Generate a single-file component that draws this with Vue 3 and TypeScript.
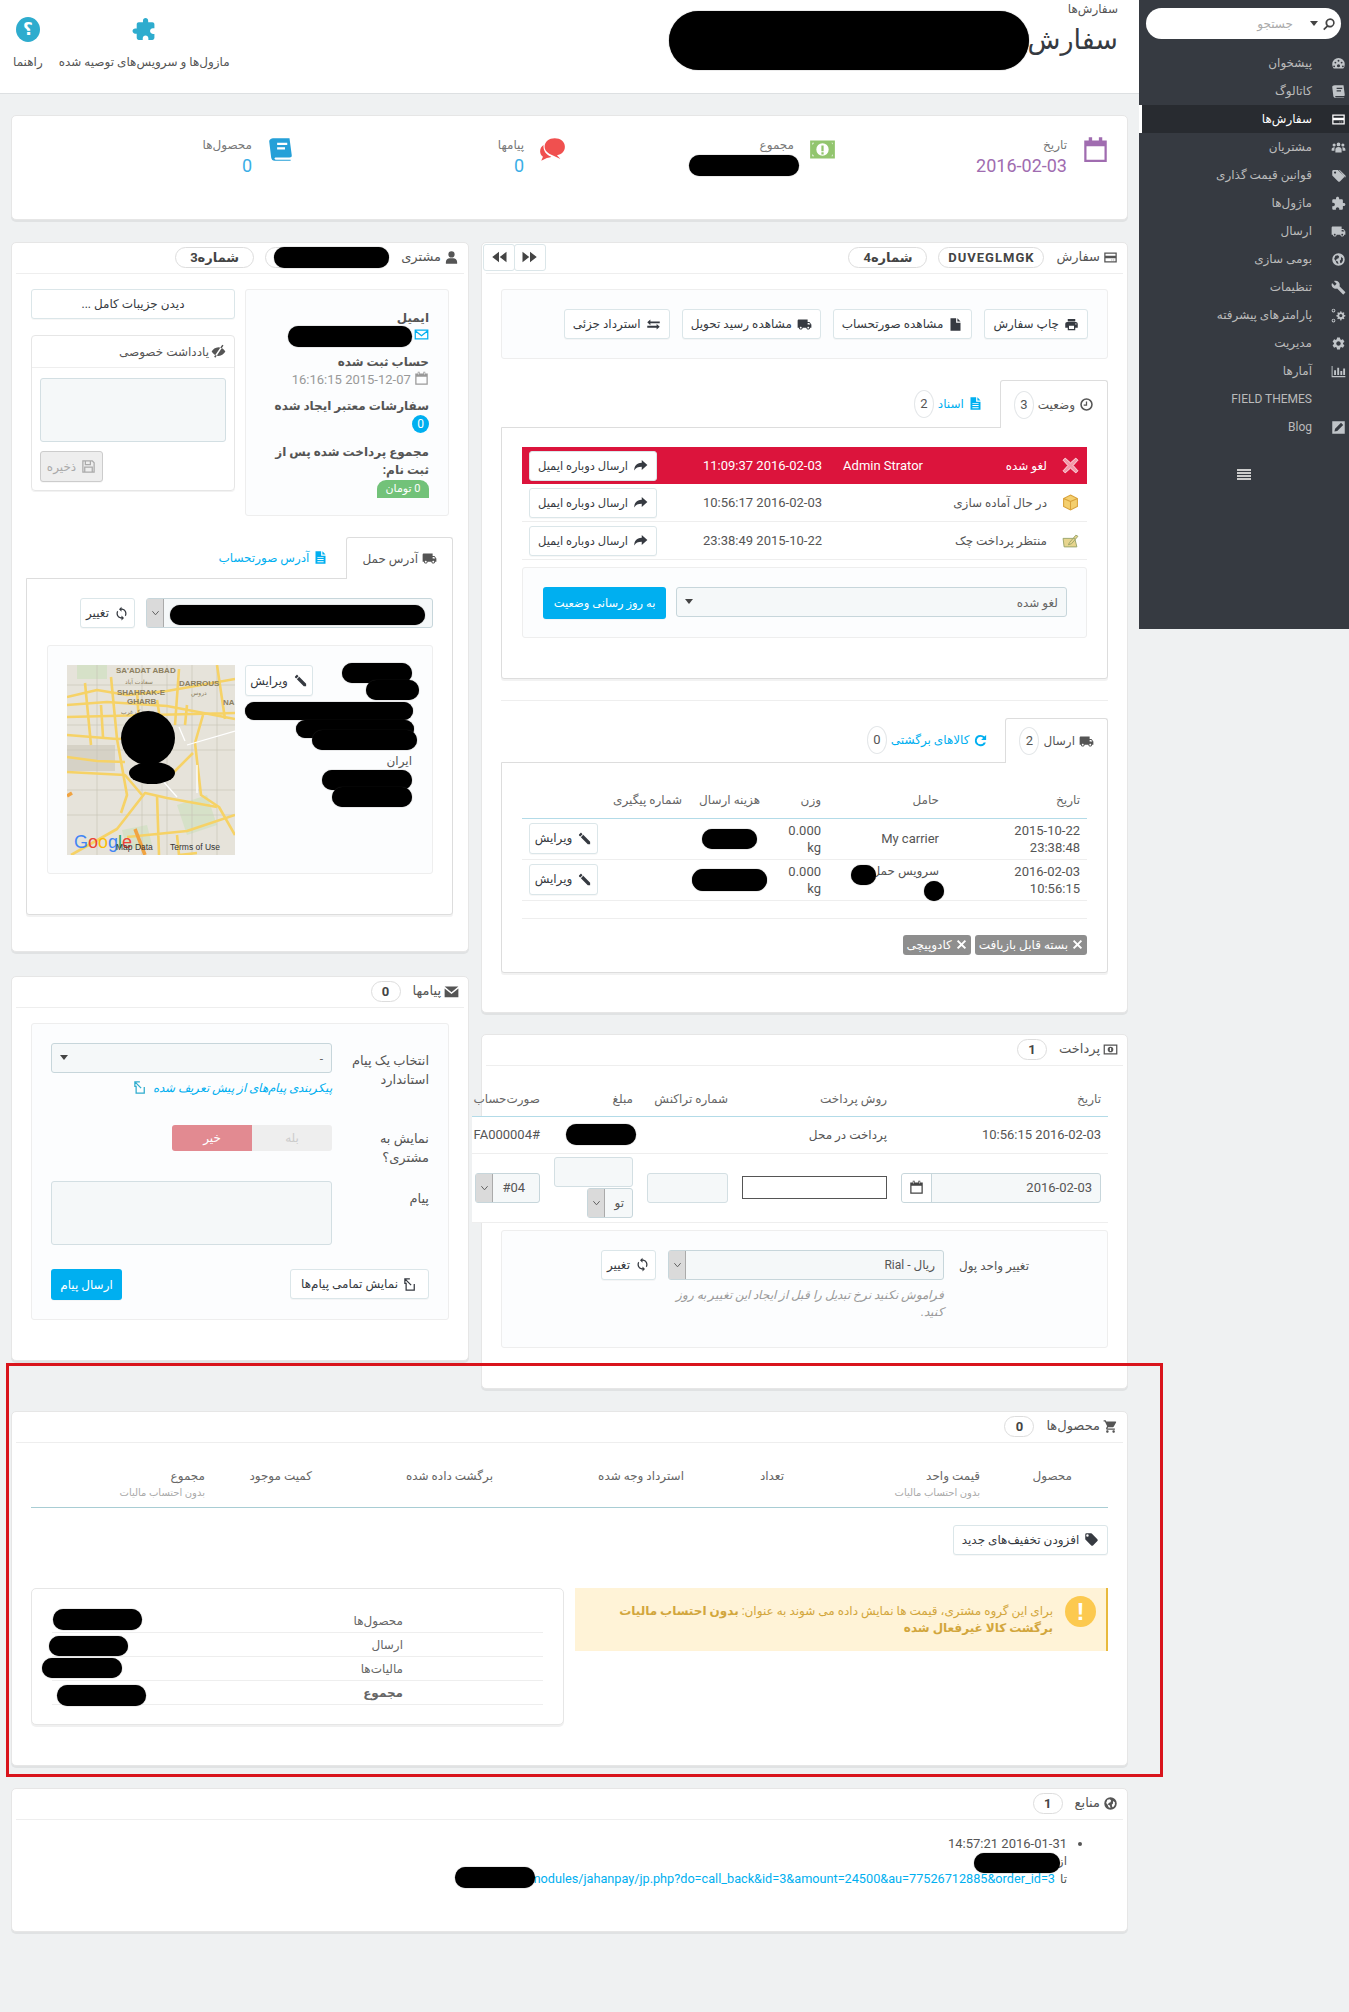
<template>
  <div class="page">
    <aside class="sidebar">
      <div class="search">
        <svg class="ic search-ic" viewBox="0 0 24 24"><path :d="icons.search" /></svg>
        <span class="caret dark"></span>
        <span class="search-text">جستجو</span>
      </div>
      <ul class="menu">
        <li v-for="item in menu" :key="item.label" :class="{ on: item.active }">
          <span class="menu-ic">
            <svg v-if="item.icon" class="ic" viewBox="0 0 24 24"><path :d="icons[item.icon]" /></svg>
          </span>
          <span>{{ item.label }}</span>
        </li>
      </ul>
      <div class="burger"><i></i><i></i><i></i><i></i></div>
    </aside>

    <main class="main">
      <header class="topbar">
        <div class="title-block">
          <div class="crumb">سفارش‌ها</div>
          <h1>سفارش</h1>
          <i class="mark m-title"></i>
        </div>
        <div class="toolbar">
          <a class="tool">
            <svg class="tool-ic flip" viewBox="0 0 24 24"><path :d="icons.puzzle" /></svg>
            <span>مازول‌ها و سرویس‌های توصیه شده</span>
          </a>
          <a class="tool">
            <span class="help-ic">؟</span>
            <span>راهنما</span>
          </a>
        </div>
      </header>

      <section class="stats">
        <div class="stat">
          <svg class="stat-ic purple" viewBox="0 0 24 24"><path :d="icons.calendarBig" /></svg>
          <div>
            <div class="stat-label">تاریخ</div>
            <div class="stat-value purple">2016-02-03</div>
          </div>
        </div>
        <div class="stat">
          <svg class="stat-ic green" viewBox="0 0 24 24"><path :d="icons.money" /></svg>
          <div>
            <div class="stat-label">مجموع</div>
            <i class="mark m-total"></i>
          </div>
        </div>
        <div class="stat">
          <svg class="stat-ic red" viewBox="0 0 24 24"><path :d="icons.chat" /></svg>
          <div>
            <div class="stat-label">پیامها</div>
            <div class="stat-value blue">0</div>
          </div>
        </div>
        <div class="stat">
          <svg class="stat-ic bookblue" viewBox="0 0 24 24"><path :d="icons.book" /></svg>
          <div>
            <div class="stat-label">محصول‌ها</div>
            <div class="stat-value blue">0</div>
          </div>
        </div>
      </section>

      <div class="columns">
        <div class="col">
          <!-- سفارش -->
          <section class="panel p-order">
            <div class="heading">
              <svg class="ic" viewBox="0 0 24 24"><path :d="icons.card" /></svg>
              <span class="h-text">سفارش</span>
              <span class="badge code">DUVEGLMGK</span>
              <span class="badge no">شماره4</span>
              <div class="pager">
                <button class="page-btn"><svg class="ic" viewBox="0 0 24 24"><path :d="icons.prev" /></svg></button>
                <button class="page-btn"><svg class="ic" viewBox="0 0 24 24"><path :d="icons.next" /></svg></button>
              </div>
            </div>

            <div class="well actions">
              <button class="btn"><svg class="ic" viewBox="0 0 24 24"><path :d="icons.print" /></svg>چاپ سفارش</button>
              <button class="btn"><svg class="ic" viewBox="0 0 24 24"><path :d="icons.file" /></svg>مشاهده صورتحساب</button>
              <button class="btn"><svg class="ic" viewBox="0 0 24 24"><path :d="icons.truck" /></svg>مشاهده رسید تحویل</button>
              <button class="btn"><svg class="ic" viewBox="0 0 24 24"><path :d="icons.exchange" /></svg>استرداد جزئی</button>
            </div>

            <ul class="tabs">
              <li class="tab active">
                <svg class="ic" viewBox="0 0 24 24"><path :d="icons.clock" /></svg>وضعیت
                <span class="count">3</span>
              </li>
              <li class="tab">
                <svg class="ic" viewBox="0 0 24 24"><path :d="icons.doc" /></svg>اسناد
                <span class="count">2</span>
              </li>
            </ul>
            <div class="tab-body status-body">
              <div v-for="row in history" :key="row.date" class="hist-row" :class="{ cancelled: row.cancelled }">
                <span class="hist-ic">
                  <svg viewBox="0 0 16 16" class="st-ic">
                    <path v-if="row.kind === 'x'" d="M3 1l5 4.500L13 1l2 2-4.500 5 4.500 5-2 2-5-4.500L3 15l-2-2 4.500-5L1 3z" fill="#f29aa9" stroke="#fff" stroke-width=".7" />
                    <path v-else-if="row.kind === 'box'" d="M8 1l6.500 3.200v7.600L8 15l-6.500-3.200V4.200z M8 7L2 4.500 M8 7l6-2.500 M8 7v8" fill="#f4cf6e" stroke="#d9a23b" stroke-width="1" />
                    <path v-else d="M1 6h11l2 8H2z M7 10l6-7 2 1-6 7-3 1z" fill="#e7d58e" stroke="#9aa56b" stroke-width=".9" />
                  </svg>
                </span>
                <span>{{ row.status }}</span>
                <span class="num">{{ row.who }}</span>
                <span class="num">{{ row.date }}</span>
                <button class="btn hist-btn"><svg class="ic" viewBox="0 0 24 24"><path :d="icons.share" /></svg>ارسال دوباره ایمیل</button>
              </div>
              <div class="well status-form">
                <div class="fake-select sel-status">لغو شده<span class="caret dark"></span></div>
                <button class="btn-blue">به روز رسانی وضعیت</button>
              </div>
            </div>

            <hr class="rule" />

            <ul class="tabs ship-tabs">
              <li class="tab active">
                <svg class="ic" viewBox="0 0 24 24"><path :d="icons.truck" /></svg>ارسال
                <span class="count">2</span>
              </li>
              <li class="tab">
                <svg class="ic" viewBox="0 0 24 24"><path :d="icons.undo" /></svg>کالاهای برگشتی
                <span class="count">0</span>
              </li>
            </ul>
            <div class="tab-body ship-body">
              <table class="grid ship-table">
                <colgroup>
                  <col class="w141" /><col class="w118" /><col class="w61" /><col class="w78" /><col class="w84" /><col class="w83" />
                </colgroup>
                <thead>
                  <tr>
                    <th>تاریخ</th>
                    <th>حامل</th>
                    <th>وزن</th>
                    <th>هزینه ارسال</th>
                    <th>شماره پیگیری</th>
                    <th></th>
                  </tr>
                </thead>
                <tbody>
                  <tr>
                    <td class="num">2015-10-22<br />23:38:48</td>
                    <td class="num">My carrier</td>
                    <td class="num">0.000<br />kg</td>
                    <td><i class="mark m-cost1"></i></td>
                    <td></td>
                    <td><button class="btn edit-btn"><svg class="ic flip" viewBox="0 0 24 24"><path :d="icons.pencil" /></svg>ویرایش</button></td>
                  </tr>
                  <tr>
                    <td class="num">2016-02-03<br />10:56:15</td>
                    <td class="rel">سرویس حمل<br />&nbsp;<i class="mark m-car1"></i><i class="mark m-car2"></i></td>
                    <td class="num">0.000<br />kg</td>
                    <td><i class="mark m-cost2"></i></td>
                    <td></td>
                    <td><button class="btn edit-btn"><svg class="ic flip" viewBox="0 0 24 24"><path :d="icons.pencil" /></svg>ویرایش</button></td>
                  </tr>
                  <tr class="empty-row"><td colspan="6"></td></tr>
                </tbody>
              </table>
              <div class="labels">
                <span class="label-grey"><svg class="ic" viewBox="0 0 24 24"><path :d="icons.times" /></svg>بسته قابل بازیافت</span>
                <span class="label-grey"><svg class="ic" viewBox="0 0 24 24"><path :d="icons.times" /></svg>کادوپیچی</span>
              </div>
            </div>
          </section>

          <!-- پرداخت -->
          <section class="panel p-pay">
            <div class="heading">
              <svg class="ic" viewBox="0 0 24 24"><path :d="icons.moneyLine" /></svg>
              <span class="h-text">پرداخت</span>
              <span class="badge round">1</span>
            </div>
            <table class="grid pay-table">
              <colgroup>
                <col class="w214" /><col class="w159" /><col class="w95" /><col class="w93" /><col class="w75" />
              </colgroup>
              <thead>
                <tr>
                  <th>تاریخ</th>
                  <th>روش پرداخت</th>
                  <th>شماره تراکنش</th>
                  <th>مبلغ</th>
                  <th>صورت‌حساب</th>
                </tr>
              </thead>
              <tbody>
                <tr class="pay-row">
                  <td class="num">2016-02-03 10:56:15</td>
                  <td>پرداخت در محل</td>
                  <td></td>
                  <td><i class="mark m-amount"></i></td>
                  <td class="num">#FA000004</td>
                </tr>
                <tr class="pay-form">
                  <td>
                    <div class="date-field">
                      <span class="num">2016-02-03</span>
                      <span class="addon"><svg class="ic" viewBox="0 0 24 24"><path :d="icons.calendar" /></svg></span>
                    </div>
                  </td>
                  <td><div class="plain-input"></div></td>
                  <td><div class="input"></div></td>
                  <td>
                    <div class="input"></div>
                    <div class="sys-select cur-select"><span class="sys-val">تو</span><span class="sys-btn"><svg viewBox="0 0 10 6"><path d="M1.500 1L5 5l3.500-4" /></svg></span></div>
                  </td>
                  <td><div class="sys-select inv-select"><span class="sys-val num">#04</span><span class="sys-btn"><svg viewBox="0 0 10 6"><path d="M1.500 1L5 5l3.500-4" /></svg></span></div></td>
                </tr>
              </tbody>
            </table>
            <div class="well currency">
              <div class="cur-label">تغییر واحد پول</div>
              <div>
                <div class="cur-line">
                  <div class="sys-select cur-main"><span class="sys-val">ریال - Rial</span><span class="sys-btn"><svg viewBox="0 0 10 6"><path d="M1.500 1L5 5l3.500-4" /></svg></span></div>
                  <button class="btn change-btn"><svg class="ic" viewBox="0 0 24 24"><path :d="icons.sync" /></svg>تغییر</button>
                </div>
                <p class="help">فراموش نکنید نرخ تبدیل را قبل از ایجاد این تغییر به روز کنید.</p>
              </div>
            </div>
          </section>
        </div>

        <div class="col left-col">
          <!-- مشتری -->
          <section class="panel p-customer">
            <div class="heading">
              <svg class="ic" viewBox="0 0 24 24"><path :d="icons.user" /></svg>
              <span class="h-text">مشتری</span>
              <span class="badge cust-badge"><i class="mark m-cust"></i></span>
              <span class="badge no">شماره3</span>
            </div>
            <div class="cust-grid">
              <div class="well cust-info">
                <div class="info-block rel">
                  <b>ایمیل</b>
                  <div><svg class="ic env" viewBox="0 0 24 24"><path class="ol" :d="icons.envelopeLine" /></svg></div>
                  <i class="mark m-email"></i>
                </div>
                <div class="info-block">
                  <b>حساب ثبت شده</b>
                  <div class="muted num"><svg class="ic cal" viewBox="0 0 24 24"><path :d="icons.calendar" /></svg> 2015-12-07 16:16:15</div>
                </div>
                <div class="info-block">
                  <b>سفارشات معتبر ایجاد شده</b>
                  <div><span class="dot-badge">0</span></div>
                </div>
                <div class="info-block last">
                  <b>مجموع پرداخت شده پس از ثبت نام:</b>
                  <div><span class="green-badge">0 تومان</span></div>
                </div>
              </div>
              <div>
                <button class="btn full">دیدن جزیبات کامل ...</button>
                <div class="note">
                  <div class="note-head"><svg class="ic" viewBox="0 0 24 24"><path :d="icons.eyeSlash" /></svg>یادداشت خصوصی</div>
                  <div class="note-body">
                    <div class="input note-area"></div>
                    <button class="btn save-btn"><svg class="ic" viewBox="0 0 24 24"><path class="ol" :d="icons.save" /></svg>ذخیره</button>
                  </div>
                </div>
              </div>
            </div>

            <ul class="tabs addr-tabs">
              <li class="tab active">
                <svg class="ic" viewBox="0 0 24 24"><path :d="icons.truck" /></svg>آدرس حمل
              </li>
              <li class="tab">
                <svg class="ic" viewBox="0 0 24 24"><path :d="icons.doc" /></svg>آدرس صورتحساب
              </li>
            </ul>
            <div class="tab-body addr-body">
              <div class="addr-select">
                <div class="sys-select addr-main"><span class="sys-val"></span><span class="sys-btn"><svg viewBox="0 0 10 6"><path d="M1.500 1L5 5l3.500-4" /></svg></span><i class="mark m-addrsel"></i></div>
                <button class="btn change-btn"><svg class="ic" viewBox="0 0 24 24"><path :d="icons.sync" /></svg>تغییر</button>
              </div>
              <div class="well addr-well">
                <div class="addr-text">
                  <i class="mark a1"></i><i class="mark a2"></i><i class="mark a3"></i><i class="mark a4"></i><i class="mark a5"></i><i class="mark a6"></i><i class="mark a7"></i>
                  <div class="country">ایران</div>
                </div>
                <button class="btn addr-edit"><svg class="ic flip" viewBox="0 0 24 24"><path :d="icons.pencil" /></svg>ویرایش</button>
                <svg class="map" viewBox="0 0 168 190">
                  <rect width="168" height="190" fill="#e6e3da" />
                  <rect x="0" y="80" width="48" height="26" fill="#d6d2c6" />
                  <path d="M10 0h30v14H10z M110 140l30-10 10 30-30 10z M55 165l25-5 5 20-25 5z" fill="#cfe0c0" opacity=".7" />
                  <g fill="none" stroke="#c9c5b8" stroke-width=".7">
                    <path d="M0 20H168 M0 60H168 M0 85H168 M0 125H168 M0 150H168 M30 0V190 M75 0V190 M100 0V190 M125 0V190 M150 0V190" />
                  </g>
                  <g fill="none" stroke="#f6d266" stroke-width="2.600" stroke-linejoin="round">
                    <path d="M0 40L40 37 100 41 168 54" />
                    <path d="M0 32L30 25 60 30 100 26 168 14" />
                    <path d="M0 70L50 74 90 72" />
                    <path d="M0 92L30 96 58 97" />
                    <path d="M0 107L58 110 75 130" />
                    <path d="M18 18L24 80 M44 12L50 74 60 130 54 148" />
                    <path d="M112 4L108 60 M90 35L94 60 M70 25L72 60" />
                    <path d="M136 50L128 78 134 130 152 142 168 170" />
                    <path d="M4 190L50 164 78 128 100 133 150 142" />
                    <path d="M60 172L120 166 168 150 M90 130L92 190 M110 170L112 190 130 188" />
                    <path d="M150 0L158 54 M126 88L104 110 M0 52L168 48 M34 40L36 72 M120 40L118 60" />
                  </g>
                  <path d="M120 80L168 66 M112 62L118 76 M130 100V128M95 115L110 132" fill="none" stroke="#fff" stroke-width="1.300" />
                  <path d="M0 131L5 128 M68 164L78 190" fill="none" stroke="#f0a341" stroke-width="3.500" />
                  <g class="map-label">
                    <text x="49" y="8">SA'ADAT ABAD</text>
                    <text x="112" y="21">DARROUS</text>
                    <text x="50" y="30">SHAHRAK-E</text>
                    <text x="60" y="39">GHARB</text>
                    <text x="156" y="40">NA</text>
                    <text x="58" y="19" class="fa">سعادت آباد</text>
                    <text x="124" y="30" class="fa">دروس</text>
                    <text x="54" y="49" class="fa">شهرک غرب</text>
                  </g>
                  <ellipse cx="81" cy="73" rx="27" ry="27" fill="#000" />
                  <ellipse cx="85" cy="108" rx="23" ry="11" fill="#000" />
                  <text x="7" y="183" class="goog"><tspan fill="#4285f4">G</tspan><tspan fill="#ea4335">o</tspan><tspan fill="#fbbc05">o</tspan><tspan fill="#4285f4">g</tspan><tspan fill="#34a853">l</tspan><tspan fill="#ea4335">e</tspan></text>
                  <text x="49" y="185" class="map-foot">Map Data</text>
                  <text x="103" y="185" class="map-foot">Terms of Use</text>
                </svg>
              </div>
            </div>
          </section>

          <!-- پیام ها -->
          <section class="panel p-messages">
            <div class="heading">
              <svg class="ic" viewBox="0 0 24 24"><path :d="icons.envelope" /></svg>
              <span class="h-text">پیامها</span>
              <span class="badge round">0</span>
            </div>
            <div class="well msg-well">
              <div class="msg-row r1">
                <label>انتخاب یک پیام استاندارد</label>
                <div>
                  <div class="fake-select">-<span class="caret dark"></span></div>
                  <a class="cfg-link">
                    پیکربندی پیام‌های از پیش تعریف شده
                    <svg class="ic" viewBox="0 0 24 24"><path class="ol" :d="icons.external" /></svg>
                  </a>
                </div>
              </div>
              <div class="msg-row r2">
                <label>نمایش به مشتری؟</label>
                <div class="switch"><span>بله</span><span class="off">خیر</span></div>
              </div>
              <div class="msg-row r3">
                <label>پیام</label>
                <div class="input msg-area"></div>
              </div>
              <div class="msg-foot">
                <button class="btn"><svg class="ic" viewBox="0 0 24 24"><path class="ol" :d="icons.external" /></svg>نمایش تمامی پیام‌ها</button>
                <button class="btn-blue send">ارسال پیام</button>
              </div>
            </div>
          </section>
        </div>
      </div>

      <!-- محصول ها -->
      <section class="panel p-products">
        <div class="heading">
          <svg class="ic" viewBox="0 0 24 24"><path :d="icons.cart" /></svg>
          <span class="h-text">محصول‌ها</span>
          <span class="badge round">0</span>
        </div>
        <table class="grid prod-table">
          <colgroup>
            <col class="w121" /><col class="w196" /><col class="w100" /><col class="w191" /><col class="w181" /><col class="w107" /><col class="w181" />
          </colgroup>
          <thead>
            <tr>
              <th class="first">محصول</th>
              <th>قیمت واحد<small>بدون احتساب مالیات</small></th>
              <th>تعداد</th>
              <th>استرداد وجه شده</th>
              <th>برگشت داده شده</th>
              <th>کمیت موجود</th>
              <th>مجموع<small>بدون احتساب مالیات</small></th>
            </tr>
          </thead>
        </table>
        <button class="btn discount-btn"><svg class="ic" viewBox="0 0 24 24"><path :d="icons.tag" /></svg>افزودن تخفیف‌های جدید</button>
        <div class="sum-row">
          <div class="alert">
            <span class="alert-ic">!</span>
            <p>برای این گروه مشتری، قیمت ها نمایش داده می شوند به عنوان: <b>بدون احتساب مالیات</b><br /><b>برگشت کالا غیرفعال شده</b></p>
          </div>
          <div class="totals">
            <div class="total-row"><span>محصول‌ها</span></div>
            <div class="total-row"><span>ارسال</span></div>
            <div class="total-row"><span>مالیات‌ها</span></div>
            <div class="total-row"><b>مجموع</b></div>
            <i class="mark t1"></i><i class="mark t2"></i><i class="mark t3"></i><i class="mark t4"></i>
          </div>
        </div>
      </section>

      <!-- منابع -->
      <section class="panel p-sources">
        <div class="heading">
          <svg class="ic" viewBox="0 0 24 24"><path :d="icons.globe" /></svg>
          <span class="h-text">منابع</span>
          <span class="badge round">1</span>
        </div>
        <ul class="sources">
          <li class="num">
            2016-01-31 14:57:21
            <div class="src-line">از<i class="mark m-from"></i></div>
            <div class="src-line">تا <a class="src-link"><bdi>/modules/jahanpay/jp.php?do=call_back&amp;id=3&amp;amount=24500&amp;au=77526712885&amp;order_id=3</bdi></a><i class="mark m-to"></i></div>
          </li>
        </ul>
      </section>
    </main>

    <!-- annotation frame -->
    <div class="red-frame"></div>
  </div>
</template>

<script setup lang="ts">
const icons: Record<string, string> = {
  search: 'M10 2a8 8 0 016.300 12.900l5.800 5.800-2.100 2.100-5.800-5.800A8 8 0 1110 2zm0 3a5 5 0 100 10 5 5 0 000-10z',
  dash: 'M12 3a10 10 0 00-10 10c0 2.500 1 5 2.500 7h15A10 10 0 0022 13 10 10 0 0012 3zM7 9a1.500 1.500 0 110 3 1.500 1.500 0 010-3zm5-3a1.500 1.500 0 110 3 1.500 1.500 0 010-3zm5 3a1.500 1.500 0 110 3 1.500 1.500 0 010-3zm-5 4a2.500 2.500 0 110 5 2.500 2.500 0 010-5zm-7 2a1.500 1.500 0 110 3 1.500 1.500 0 010-3zm14 0a1.500 1.500 0 110 3 1.500 1.500 0 010-3z',
  book: 'M6 2h14l2 15c.2 1.400-.6 2-2 2H8c-1 0-1.500.5-1.300 1.200.2.500.7.800 1.300.800h13v1H7c-2 0-3-1.300-3.300-3L2 5c-.2-1.800 1.800-3 4-3zm3 4v2h9V6zm0 4v2h7v-2z',
  card: 'M2 4h20v16H2zm2 2v3h16V6zm0 7v5h16v-5zm9 2.500h2v1h-2zm3 0h2v1h-2z',
  users: 'M12 4a3 3 0 110 6 3 3 0 010-6zM5 5.500a2.500 2.500 0 110 5 2.500 2.500 0 010-5zm14 0a2.500 2.500 0 110 5 2.500 2.500 0 010-5zM7 20v-5c0-2 2-4 5-4s5 2 5 4v5zM1 17v-2c0-2 1.500-3.500 4-3.500.7 0 1 0 1.300.2C5.500 12.800 5.500 14 5.500 17zm22 0v-2c0-2-1.500-3.500-4-3.500-.7 0-1 0-1.300.2.800 1.100.800 2.300.800 5.300z',
  tags: 'M11 3H4a2 2 0 00-2 2v7l9.500 9.500a2 2 0 002.800 0l6.200-6.200a2 2 0 000-2.800zM6.500 9a1.800 1.800 0 110-3.600 1.800 1.800 0 010 3.600zM14 3l9 9c.6.600.6 2 0 2.600l-1 1c.3-1-.1-2-.7-2.600L12.500 3z',
  puzzle: 'M20.500 11H19V7c0-1.100-.9-2-2-2h-4V3.500C13 2.120 11.880 1 10.500 1S8 2.120 8 3.500V5H4c-1.100 0-1.990.9-1.990 2v3.800H3.500c1.490 0 2.700 1.210 2.700 2.700s-1.210 2.700-2.700 2.700H2V20c0 1.100.9 2 2 2h3.800v-1.500c0-1.490 1.210-2.700 2.700-2.700 1.490 0 2.700 1.210 2.700 2.700V22H17c1.100 0 2-.9 2-2v-4h1.500c1.380 0 2.500-1.120 2.500-2.500S21.880 11 20.500 11z',
  truck: 'M20 8h-3V4H3c-1.100 0-2 .9-2 2v11h2c0 1.660 1.340 3 3 3s3-1.340 3-3h6c0 1.660 1.340 3 3 3s3-1.340 3-3h2v-5l-3-4zM6 18.500c-.83 0-1.500-.67-1.500-1.500s.67-1.500 1.500-1.500 1.500.67 1.500 1.500-.67 1.500-1.500 1.500zm13.500-9l1.960 2.500H17V9.500h2.500zm-1.500 9c-.83 0-1.500-.67-1.500-1.500s.67-1.500 1.500-1.500 1.500.67 1.500 1.500-.67 1.500-1.500 1.500z',
  globe: 'M12 2a10 10 0 100 20 10 10 0 000-20zM7 6l4-1 2 2-1 3-3 1-1 3 3 1 1 4-3-1-2-5-2-2zm9 2l3 2v4l-2 3-2 1-1-4 2-2z',
  wrench: 'M22.700 19l-9.100-9.100c.9-2.300.4-5-1.500-6.900-2-2-5-2.400-7.400-1.300L9 6 6 9 1.600 4.700C.4 7.100.9 10.100 2.900 12.100c1.900 1.900 4.600 2.400 6.900 1.500l9.100 9.100c.4.4 1 .4 1.400 0l2.300-2.300c.5-.4.5-1.100.1-1.400z',
  cogs: 'M15 5l1.500 0 .5 2 1.600.7 1.800-1 1.100 1.100-1 1.800.6 1.400 1.900.6v1.600l-1.900.6-.6 1.400 1 1.800-1.100 1.100-1.800-1-1.600.7-.5 2H15l-.5-2-1.600-.7-1.800 1-1.100-1.100 1-1.800-.6-1.400-1.900-.6v-1.600l1.900-.6.6-1.400-1-1.800 1.100-1.100 1.800 1 1.600-.7zm.700 4.500a2.600 2.600 0 100 5.200 2.600 2.600 0 000-5.200zM4 1a3 3 0 110 6 3 3 0 010-6zm0 1.500a1.500 1.500 0 100 3 1.500 1.500 0 000-3zM4 17a3 3 0 110 6 3 3 0 010-6zm0 1.500a1.500 1.500 0 100 3 1.500 1.500 0 000-3z',
  cog: 'M19.140 12.940c.04-.3.06-.61.06-.94 0-.32-.02-.64-.07-.94l2.030-1.580a.49.49 0 00.12-.61l-1.920-3.320a.488.488 0 00-.59-.22l-2.390.96c-.5-.38-1.030-.7-1.620-.94l-.36-2.540a.484.484 0 00-.48-.41h-3.840c-.24 0-.43.17-.47.41l-.36 2.540c-.59.24-1.130.57-1.620.94l-2.390-.96c-.22-.08-.47 0-.59.22L2.740 8.870c-.12.21-.08.47.12.61l2.030 1.580c-.05.3-.09.63-.09.94s.02.64.07.94l-2.030 1.580a.49.49 0 00-.12.61l1.920 3.320c.12.22.37.29.59.22l2.390-.96c.5.38 1.030.7 1.620.94l.36 2.540c.05.24.24.41.48.41h3.840c.24 0 .44-.17.47-.41l.36-2.540c.59-.24 1.130-.56 1.620-.94l2.390.96c.22.08.47 0 .59-.22l1.920-3.320c.12-.22.07-.47-.12-.61l-2.010-1.580zM12 15.600c-1.980 0-3.600-1.620-3.600-3.600s1.620-3.600 3.600-3.600 3.600 1.620 3.600 3.600-1.620 3.600-3.600 3.600z',
  chart: 'M1 3h1.500v16H23v2H1zM5 10h3v7.500H5zm5-4h3v11.500h-3zm5 5h3v6.500h-3zm4.500-4h3v10.500h-3z',
  blog: 'M2 2h20v20H2zm14 2.500L6.500 14l-1 4.500 4.500-1L19.500 8z',
  next: 'M12 5l-9 7 9 7zM22 5l-9 7 9 7z',
  prev: 'M2 5l9 7-9 7zM12 5l9 7-9 7z',
  print: 'M19 8H5c-1.660 0-3 1.340-3 3v6h4v4h12v-4h4v-6c0-1.660-1.340-3-3-3zm-3 11H8v-5h8v5zm3-7c-.55 0-1-.45-1-1s.45-1 1-1 1 .45 1 1-.45 1-1 1zM18 3H6v4h12z',
  file: 'M13 2v7h7v13H4V2zM15 2l5 5h-5z',
  exchange: 'M7 4v3h15v3H7v3L2 8.500zM17 11v3H2v3h15v3l5-4.500z',
  clock: 'M12 2a10 10 0 100 20 10 10 0 000-20zm0 2.500a7.500 7.500 0 110 15 7.500 7.500 0 010-15zM11 7h2v7H7.500v-2H11z',
  doc: 'M13 2v7h7v13H4V2zM15 2l5 5h-5zM7 11v1.500h10V11zm0 3.500V16h10v-1.500zm0 3.500v1.500h10V18z',
  share: 'M14 3l9 8-9 8v-5C8 14 4.500 15.500 2 20 2 13 5 8 14 7.500z',
  pencil: 'M3 17.250V21h3.750L17.810 9.940l-3.750-3.750L3 17.250zM20.710 7.040c.39-.39.39-1.020 0-1.410l-2.340-2.340c-.39-.39-1.020-.39-1.410 0l-1.830 1.830 3.750 3.750 1.830-1.830z',
  sync: 'M12 4V1L8 5l4 4V6c3.310 0 6 2.690 6 6 0 1.010-.25 1.970-.7 2.800l1.460 1.460A7.930 7.930 0 0020 12c0-4.420-3.580-8-8-8zm0 14c-3.310 0-6-2.690-6-6 0-1.010.25-1.970.7-2.800L5.240 7.740A7.930 7.930 0 004 12c0 4.420 3.580 8 8 8v3l4-4-4-4v3z',
  undo: 'M12 3a9 9 0 108.500 12h-3.300A6 6 0 1112 6c1.700 0 3.100.7 4.200 1.800L13 11h8V3l-2.700 2.700A9 9 0 0012 3z',
  user: 'M12 2a5 5 0 110 10 5 5 0 010-10zM3 22v-3c0-3.500 3-6 6-6h6c3 0 6 2.500 6 6v3z',
  envelope: 'M1 4h22L12 13zM1 7v14h22V7L12 16z',
  envelopeLine: 'M2 5h20v14H2zM2 6l10 8 10-8',
  calendar: 'M6 1h3v3h6V1h3v3h4v18H2V4h4zM4 9v11h16V9zM7 2.500v3h1v-3zm9 0v3h1v-3z',
  calendarBig: 'M6 1h3v3h6V1h3v3h4v19H2V4h4zM4 9v12h16V9z',
  money: 'M1 4h22v16H1zm3.500 2H3v2zM20 6l1 1.500V6zM3 16v2h1.500zm18 0l-1 2h1zM12 6.500a5.500 5.500 0 100 11 5.500 5.500 0 000-11zm-1 2h2v5h-2zm0 6h2v2h-2z',
  moneyLine: 'M1 4h22v16H1zm2 2v12h18V6zm9 1.500a4.500 4.500 0 110 9 4.500 4.500 0 010-9zm-1 2v5h2v-5z',
  chat: 'M14 2c5 0 9 3 9 7.500 0 4-3 7-7 7.500l3 3.500-7-3.500C8 15.500 5 13 5 9.500 5 5 9 2 14 2zM4 8c-1.800 1.300-3 3-3 5.500 0 2 1 3.800 2.500 5L2 22l5-2.500c1.500 0 3-.5 4-1C6.500 17 3.500 13 4 8z',
  times: 'M5 2l7 7 7-7 3 3-7 7 7 7-3 3-7-7-7 7-3-3 7-7-7-7z',
  eyeSlash: 'M12 5c5 0 9 3.500 11 7-2 3.500-6 7-11 7S3 15.500 1 12c2-3.500 6-7 11-7zm6-4l2 1.500L7 22l-2-1.500z',
  save: 'M3 3h15l3 3v15H3zM7 3v6h8V3M6 21v-8h12v8',
  external: 'M5 9v12h13V11M11 3H3v8 M3 3l10 10',
  cart: 'M7 18c-1.100 0-1.990.9-1.990 2S5.900 22 7 22s2-.9 2-2-.9-2-2-2zM1 2v2h2l3.600 7.590-1.350 2.450c-.16.28-.25.61-.25.96 0 1.100.9 2 2 2h12v-2H7.420c-.14 0-.25-.11-.25-.25l.03-.12.9-1.630h7.450c.75 0 1.410-.41 1.750-1.030l3.580-6.490A1 1 0 0020 4H5.210l-.94-2H1zm16 16c-1.100 0-1.990.9-1.990 2s.89 2 1.990 2 2-.9 2-2-.9-2-2-2z',
  tag: 'M21.410 11.580l-9-9A2 2 0 0011 2H4a2 2 0 00-2 2v7c0 .55.22 1.050.59 1.420l9 9a2 2 0 002.820 0l7-7a2 2 0 000-2.840zM5.500 7.500a2 2 0 110-4 2 2 0 010 4z',
}

interface MenuItem {
  label: string
  icon?: string
  active?: boolean
}

const menu: MenuItem[] = [
  { label: 'پیشخوان', icon: 'dash' },
  { label: 'کاتالوگ', icon: 'book' },
  { label: 'سفارش‌ها', icon: 'card', active: true },
  { label: 'مشتریان', icon: 'users' },
  { label: 'قوانین قیمت گذاری', icon: 'tags' },
  { label: 'ماژول‌ها', icon: 'puzzle' },
  { label: 'ارسال', icon: 'truck' },
  { label: 'بومی سازی', icon: 'globe' },
  { label: 'تنظیمات', icon: 'wrench' },
  { label: 'پارامترهای پیشرفته', icon: 'cogs' },
  { label: 'مدیریت', icon: 'cog' },
  { label: 'آمارها', icon: 'chart' },
  { label: 'FIELD THEMES' },
  { label: 'Blog', icon: 'blog' },
]

const history = [
  { kind: 'x', status: 'لغو شده', who: 'Admin Strator', date: '2016-02-03 11:09:37', cancelled: true },
  { kind: 'box', status: 'در حال آماده سازی', who: '', date: '2016-02-03 10:56:17', cancelled: false },
  { kind: 'note', status: 'منتظر پرداخت چک', who: '', date: '2015-10-22 23:38:49', cancelled: false },
]
</script>

<style scoped>
* { box-sizing: border-box; }

.page {
  position: relative;
  direction: rtl;
  display: flex;
  align-items: flex-start;
  height: 2012px;
  overflow: hidden;
  background: #eff1f2;
  color: #555;
  font-family: Roboto, "DejaVu Sans", sans-serif;
  font-size: 12px;
  line-height: 18px;
}

.num { font-size: 13px; }
.rel { position: relative; }
.ic { width: 15px; height: 15px; fill: currentColor; flex: none; vertical-align: -2px; }
.ic path { fill-rule: evenodd; }
.ic path.ol { fill: none; stroke: currentColor; stroke-width: 2; }
.flip { transform: scaleX(-1); }
.mark { position: absolute; display: block; background: #000; border-radius: 12px; box-shadow: 0 0 1px #333; z-index: 2; }

/* sidebar */
.sidebar {
  position: relative;
  flex: none;
  width: 210px;
  height: 629px;
  background: #363a41;
  color: #bbb;
}
.search {
  display: flex;
  align-items: center;
  height: 31px;
  margin: 8px 8px 10px 7px;
  padding: 0 5px;
  gap: 4px;
  background: #fff;
  border-radius: 16px;
  color: #444;
}
.search-ic { transform: scaleX(-1); width: 14px; height: 14px; }
.search-text { margin-right: 13px; color: #aaa; }
.caret { display: inline-block; width: 0; height: 0; border: 4px solid transparent; border-bottom: 0; border-top: 5px solid #444; }
.menu { list-style: none; margin: 0; padding: 0; }
.menu li {
  display: flex;
  align-items: center;
  gap: 19px;
  height: 28px;
  padding-right: 4px;
}
.menu-ic { width: 14px; display: flex; justify-content: center; color: #c0c4c8; }
.menu li.on { background: #282b30; color: #fff; border-left: 3px solid #fff; }
.menu li.on .menu-ic { color: #fff; }
.burger { width: 14px; margin: 28px 98px 0 0; }
.burger i { display: block; height: 2px; margin-bottom: 1px; background: #ccc; }

/* top */
.main { flex: none; width: 1139px; padding-bottom: 20px; }
.topbar {
  display: flex;
  justify-content: space-between;
  height: 94px;
  background: #fff;
  border-bottom: 1px solid #dde0e2;
}
.title-block { position: relative; padding: 0 21px 0 0; width: 470px; }
.crumb { height: 18px; font-size: 12px; color: #555; }
h1 { margin: 5px 0 0; font-size: 27px; font-weight: 400; line-height: 34px; color: #363a41; }
.m-title { left: 0; top: 11px; width: 360px; height: 59px; border-radius: 30px; }
.toolbar { display: flex; padding: 17px 0 0 13px; gap: 16px; }
.tool { display: flex; flex-direction: column; align-items: center; gap: 11px; }
.tool-ic { width: 28px; height: 25px; fill: #2eacce; }
.help-ic {
  width: 24px;
  height: 25px;
  border-radius: 50%;
  background: #2eacce;
  color: #fff;
  font-size: 17px;
  font-weight: 700;
  line-height: 25px;
  text-align: center;
}

.stats {
  display: grid;
  grid-template-columns: 273px 270px 272px 270px;
  height: 105px;
  margin: 21px 11px 22px;
  padding: 20px 18px;
  background: #fff;
  border: 1px solid #e6e6e6;
  border-radius: 5px;
  box-shadow: 0 2px 0 rgba(0, 0, 0, .06);
}
.stat { display: flex; align-items: flex-start; gap: 15px; }
.stat-ic { flex: none; width: 27px; height: 27px; fill: currentColor; }
.stat-label { color: #777; line-height: 18px; }
.stat-value { font-size: 18px; line-height: 24px; }
.purple { color: #a06cb0; }
.green { color: #92c56e; }
.red { color: #f0504f; }
.bookblue { color: #25a0d8; }
.blue { color: #3aaee6; }
.stat:nth-child(2) > div { position: relative; }
.m-total { top: 19px; right: -5px; width: 110px; height: 21px; }

.columns {
  display: grid;
  grid-template-columns: 647px 458px;
  gap: 12px;
  margin: 0 11px;
  align-items: start;
}
.col { display: flex; flex-direction: column; gap: 21px; }
.left-col { gap: 24px; }

/* panels */
.panel {
  position: relative;
  padding: 20px 19px;
  background: #fff;
  border: 1px solid #e6e6e6;
  border-radius: 5px;
  box-shadow: 0 2px 0 rgba(0, 0, 0, .06);
}
.p-order { height: 771px; }
.p-pay { height: 355px; }
.p-customer { height: 710px; }
.p-messages { height: 385px; }
.p-products { height: 355px; margin: 22px 11px 0; }
.p-sources { height: 144px; margin: 22px 11px 0; }
.heading {
  display: flex;
  align-items: center;
  gap: 3px;
  height: 31px;
  margin: -20px -15px 15px;
  padding: 0 5px 2px;
  border-bottom: 1px solid #eee;
  color: #555;
}
.h-text { font-size: 13px; margin-left: 9px; }
.badge {
  display: inline-block;
  height: 21px;
  margin-left: 8px;
  padding: 0 12px;
  border: 1px solid #ddd;
  border-radius: 11px;
  background: #fff;
  font-weight: 700;
  font-size: 12px;
  line-height: 19px;
  color: #444;
  text-align: center;
}
.badge.code { width: 106px; padding: 0; font-size: 13px; letter-spacing: 1px; }
.badge.no { width: 79px; padding: 0; font-size: 13px; }
.badge.round { min-width: 30px; padding: 0 8px; font-size: 13px; }
.cust-badge { position: relative; width: 124px; padding: 0; }
.m-cust { left: 8px; right: -1px; top: -1px; height: 21px; }
.pager { margin-right: auto; display: flex; margin-left: -8px; }
.page-btn {
  width: 32px;
  height: 27px;
  padding: 0;
  background: #fff;
  border: 1px solid #dbe6e9;
  color: #444;
  border-radius: 3px;
}
.page-btn .ic { width: 18px; height: 18px; vertical-align: -4px; }
.page-btn + .page-btn { margin-right: -1px; }

.well {
  background: #fcfdfe;
  border: 1px solid #eee;
  border-radius: 3px;
  padding: 19px;
}

.btn, .btn-blue {
  display: inline-flex;
  align-items: center;
  justify-content: center;
  gap: 5px;
  height: 30px;
  padding: 0 8px;
  font: inherit;
  color: #363a41;
  background: #fff;
  border: 1px solid #dbe6e9;
  border-radius: 3px;
  box-shadow: 0 1px 0 rgba(0, 0, 0, .03);
  white-space: nowrap;
}
.btn-blue { background: #00aff0; border-color: #008abd; border: 0; color: #fff; }

.actions { display: flex; gap: 12px; height: 70px; padding-left: 0; }
.tabs {
  list-style: none;
  display: flex;
  height: 47px;
  margin: 21px 0 0;
  padding: 0;
}
.tab {
  display: flex;
  align-items: center;
  gap: 4px;
  padding: 0 17px;
  color: #00aff0;
}
.tab .count {
  width: 20px;
  height: 28px;
  border: 1px solid #e4e7e9;
  border-radius: 50%;
  color: #555;
  font-size: 13px;
  line-height: 26px;
  text-align: center;
}
.tab.active {
  position: relative;
  z-index: 1;
  height: 48px;
  background: #fff;
  border: 1px solid #ddd;
  border-bottom: 0;
  border-radius: 3px 3px 0 0;
  color: #555;
  padding: 0 13px;
}
.tab-body {
  border: 1px solid #ddd;
  border-radius: 0 0 3px 3px;
  box-shadow: 0 2px 0 rgba(0, 0, 0, .05);
  background: #fff;
  padding: 19px 20px;
}
.status-body { height: 252px; }
.hist-row {
  display: grid;
  grid-template-columns: 40px 124px 101px 165px 128px;
  align-items: center;
  height: 38px;
  padding-left: 7px;
  border-bottom: 1px solid #eee;
}
.hist-row.cancelled { background: #dc143c; color: #fff; border: 0; height: 37px; }
.hist-ic { display: flex; justify-content: center; padding-left: 6px; }
.st-ic { width: 17px; height: 17px; }
.hist-btn { width: 128px; padding: 0; white-space: nowrap; font-size: 11.500px; }
.status-form { display: flex; gap: 10px; height: 71px; margin-top: 7px; }
.fake-select {
  position: relative;
  height: 30px;
  padding: 0 8px;
  line-height: 31px;
  background: #f5f8f9;
  border: 1px solid #c7d6db;
  border-radius: 3px;
  color: #666;
}
.fake-select .caret { position: absolute; left: 8px; top: 11px; }
.sel-status { width: 391px; }
.status-form .btn-blue { width: 123px; height: 32px; padding: 0; font-size: 11.500px; }

.rule { margin: 21px 0 17px; border: 0; border-top: 1px solid #eee; }
.ship-tabs { margin-top: 0; height: 44px; }
.ship-tabs .tab.active { height: 45px; }
.ship-body { height: 211px; }

.grid { table-layout: fixed; border-collapse: collapse; }
.grid th { font-weight: 400; text-align: right; color: #666; padding: 0 7px; vertical-align: top; }
.grid td { padding: 0 7px; vertical-align: middle; }
.ship-table { width: 565px; }
.ship-table thead tr { height: 36px; border-bottom: 1px solid #b3dbe8; }
.ship-table th { padding-top: 9px; }
.ship-table tbody tr { height: 41px; border-bottom: 1px solid #eee; }
.ship-table td { line-height: 17px; font-size: 12px; }
.ship-table td.num { font-size: 13px; }
.ship-table .empty-row { height: 18px; }
.w141 { width: 141px; } .w118 { width: 118px; } .w61 { width: 61px; } .w78 { width: 78px; } .w84 { width: 84px; } .w83 { width: 83px; }
.edit-btn { width: 69px; height: 31px; padding: 0; }
.m-cost1, .m-cost2, .m-amount { position: relative; }
.m-cost1 { width: 55px; height: 20px; margin-right: 3px; }
.m-cost2 { width: 75px; height: 22px; margin-right: -7px; }
.m-car1 { right: 70px; top: 5px; width: 25px; height: 20px; }
.m-car2 { right: 2px; top: 21px; width: 20px; height: 20px; }
.labels { display: flex; gap: 4px; margin-top: 16px; }
.label-grey {
  display: inline-flex;
  align-items: center;
  gap: 4px;
  height: 20px;
  padding: 0 4px;
  background: #8e8e8e;
  border-radius: 3px;
  color: #fff;
}
.label-grey .ic { width: 11px; height: 11px; }

/* payment */
.pay-table { width: 636px; }
.pay-table thead tr { height: 35px; border-bottom: 1px solid #b3dbe8; }
.pay-table th { padding: 9px 7px 0; }
.pay-row { height: 37px; background: #fff; border-bottom: 1px solid #eee; }
.pay-form { height: 69px; background: #fff; border-bottom: 1px solid #eee; }
.w214 { width: 214px; } .w159 { width: 159px; } .w95 { width: 95px; } .w93 { width: 93px; } .w75 { width: 75px; }
.m-amount { width: 70px; height: 21px; margin-right: -3px; }
.date-field {
  display: flex;
  justify-content: space-between;
  align-items: center;
  height: 30px;
  padding-right: 8px;
  background: #f5f8f9;
  border: 1px solid #c7d6db;
  border-radius: 3px;
}
.addon { display: flex; align-items: center; justify-content: center; width: 30px; height: 28px; background: #fff; border-right: 1px solid #c7d6db; border-radius: 3px 0 0 3px; color: #444; }
.plain-input { width: 145px; height: 23px; border: 1px solid #555; background: #fff; }
.input {
  height: 30px;
  background: #f5f8f9;
  border: 1px solid #d3dfe3;
  border-radius: 3px;
}
.sys-select {
  position: relative;
  display: flex;
  justify-content: space-between;
  height: 30px;
  background: #f5f8f9;
  border: 1px solid #c7d6db;
  border-radius: 3px;
}
.sys-val { padding: 0 8px; line-height: 28px; white-space: nowrap; color: #555; }
.sys-btn { flex: none; display: flex; align-items: center; justify-content: center; width: 17px; background: #dadada; border-right: 1px solid #aaa; }
.sys-btn svg { width: 9px; height: 6px; }
.sys-btn path { fill: none; stroke: #555; stroke-width: 1; }
.cur-select { width: 46px; margin-top: 1px; }
.inv-select { width: 65px; }
.inv-select .sys-val { padding: 0 14px 0 0; }
.currency {
  display: grid;
  grid-template-columns: 144px 1fr;
  height: 118px;
  margin-top: 7px;
  padding-left: 60px;
}
.cur-label { padding: 7px 59px 0 0; white-space: nowrap; }
.cur-line { display: flex; gap: 12px; }
.cur-main { width: 276px; }
.cur-main .sys-val { font-size: 12px; }
.change-btn { width: 55px; padding: 0; }
.help { width: 272px; margin: 7px 0 0; color: #999; font-style: italic; font-size: 12px; line-height: 17px; }

/* customer */
.cust-grid { display: grid; grid-template-columns: 204px 204px; gap: 10px; }
.cust-info { height: 227px; }
.info-block { margin-bottom: 8px; }
.info-block b { display: block; color: #555; }
.info-block.last { margin-top: 10px; }
.muted { color: #999; font-size: 13px; white-space: nowrap; }
.env { color: #00aff0; }
.cal { color: #999; }
.m-email { right: 17px; top: 17px; width: 124px; height: 21px; }
.dot-badge, .green-badge {
  display: inline-block;
  height: 18px;
  color: #fff;
  line-height: 18px;
  text-align: center;
}
.dot-badge { width: 17px; background: #00aff0; border-radius: 50%; }
.green-badge { width: 52px; background: #72c279; border-radius: 9px 9px 0 0; font-size: 11px; }
.full { width: 100%; }
.note {
  height: 156px;
  margin-top: 16px;
  border: 1px solid #e6e6e6;
  border-radius: 4px;
  box-shadow: 0 1px 0 rgba(0, 0, 0, .05);
}
.note-head { display: flex; align-items: center; gap: 2px; height: 32px; padding: 0 8px; border-bottom: 1px solid #eee; }
.note-body { padding: 10px 8px 0 8px; }
.note-area { height: 64px; }
.save-btn {
  display: flex;
  width: 63px;
  height: 31px;
  margin-top: 9px;
  margin-right: auto;
  padding: 0;
  background: #eee;
  border-color: #ccc;
  color: #aaa;
}
.addr-tabs { height: 41px; margin: 21px -4px 0 -5px; }
.addr-tabs .tab.active { height: 42px; padding: 0 15px; }
.addr-tabs .tab { padding: 0 18px; }
.addr-body { height: 337px; margin: 0 -4px 0 -5px; padding: 19px 19px 19px 20px; }
.addr-select { display: flex; gap: 11px; }
.addr-main { width: 287px; }
.m-addrsel { left: 23px; top: 6px; width: 255px; height: 20px; }
.addr-well { display: flex; gap: 10px; height: 229px; margin-top: 17px; padding: 19px; }
.addr-text { position: relative; flex: 1; }
.country { padding: 87px 0 0; margin-right: 1px; }
.addr-edit { width: 68px; height: 31px; padding: 0; }
.map { flex: none; width: 168px; height: 190px; }
.map-label text { font-family: "Liberation Sans", sans-serif; font-size: 8px; font-weight: 700; fill: #8c7f60; direction: ltr; }
.map-label text.fa { font-family: "DejaVu Sans", sans-serif; font-size: 6px; font-weight: 400; }
.goog { font-family: "Liberation Sans", sans-serif; font-size: 18px; direction: ltr; }
.map-foot { font-family: "Liberation Sans", sans-serif; font-size: 8.500px; fill: #333; direction: ltr; }
.a1 { right: 1px; top: -2px; width: 70px; height: 20px; }
.a2 { right: -6px; top: 15px; width: 53px; height: 20px; }
.a3 { right: 0; top: 37px; width: 168px; height: 18px; }
.a4 { right: -1px; top: 55px; width: 118px; height: 18px; }
.a5 { right: -4px; top: 65px; width: 105px; height: 20px; }
.a6 { right: 1px; top: 105px; width: 90px; height: 20px; }
.a7 { right: 1px; top: 122px; width: 80px; height: 20px; }

/* messages */
.msg-well { height: 297px; padding: 19px; }
.msg-row { display: grid; grid-template-columns: 87px 281px; gap: 10px; }
.msg-row label { padding: 8px 0 0 0; line-height: 19px; font-size: 13px; }
.r1 { height: 82px; }
.r2 { height: 56px; }
.r2 label { padding-top: 4px; }
.r3 { height: 88px; }
.cfg-link { display: block; margin-top: 6px; color: #00aff0; font-style: italic; white-space: nowrap; }
.cfg-link .ic { vertical-align: -3px; margin-right: 2px; color: #2eacce; }
.switch { display: flex; height: 26px; text-align: center; line-height: 26px; width: 160px; border-radius: 3px; overflow: hidden; margin-left: auto; margin-right: 0; }
.switch span { flex: 1; background: #eee; color: #ccc; }
.switch .off { background: #e28a91; color: #fff; }
.msg-area { height: 64px; }
.msg-foot { display: flex; justify-content: space-between; }
.msg-foot .btn { width: 139px; padding: 0; }
.send { width: 71px; height: 31px; padding: 0; }

/* products */
.prod-table { width: 1077px; }
.prod-table thead tr { height: 49px; border-bottom: 1px solid #a8cdd4; }
.prod-table th { padding-top: 9px; }
.prod-table th.first { padding-right: 36px; }
.prod-table small { display: block; color: #aaa; font-size: 10px; line-height: 16px; }
.w121 { width: 121px; } .w196 { width: 196px; } .w100 { width: 100px; } .w191 { width: 191px; } .w181 { width: 181px; } .w107 { width: 107px; }
.discount-btn { display: flex; width: 155px; margin-top: 17px; padding: 0; }
.sum-row { display: grid; grid-template-columns: 533px 533px; gap: 11px; margin-top: 33px; align-items: start; }
.alert {
  display: flex;
  gap: 12px;
  height: 63px;
  padding: 8px 10px 0 0;
  background: #fff3d7;
  border-right: 2px solid #e8b93c;
  color: #d2a63c;
  font-size: 12px;
}
.alert p { margin: 7px 0 0; line-height: 17px; }
.alert-ic {
  flex: none;
  width: 31px;
  height: 31px;
  border-radius: 50%;
  background: #fcc94f;
  color: #fff;
  font: 700 24px/31px "Liberation Sans", sans-serif;
  text-align: center;
}
.totals {
  position: relative;
  height: 137px;
  padding: 20px;
  background: #fff;
  border: 1px solid #e6e6e6;
  border-radius: 5px;
  box-shadow: 0 2px 0 rgba(0, 0, 0, .06);
}
.total-row {
  height: 24px;
  padding: 3px 140px 0 0;
  border-bottom: 1px solid #eee;
  color: #666;
}
.t1 { left: 21px; top: 20px; width: 89px; height: 21px; }
.t2 { left: 17px; top: 47px; width: 79px; height: 20px; }
.t3 { left: 10px; top: 69px; width: 80px; height: 20px; }
.t4 { left: 25px; top: 96px; width: 89px; height: 21px; }

/* sources */
.sources { margin: 0; padding: 0 41px 0 0; font-size: 13px; }
.sources li { position: relative; }
.sources li.num { font-size: 13px; }
.src-line { position: relative; font-size: 12px; line-height: 17px; }
.src-link { margin-right: 2px; color: #00aff0; font-size: 12.700px; }
.m-from { right: 7px; top: 0; width: 86px; height: 20px; }
.m-to { right: 532px; top: -3px; width: 80px; height: 21px; }

/* annotation */
.red-frame {
  position: absolute;
  left: 6px;
  top: 1363px;
  width: 1157px;
  height: 414px;
  border: 3px solid #d9141c;
  pointer-events: none;
  z-index: 5;
}
</style>

<style>
body { background: #eff1f2; }
</style>
